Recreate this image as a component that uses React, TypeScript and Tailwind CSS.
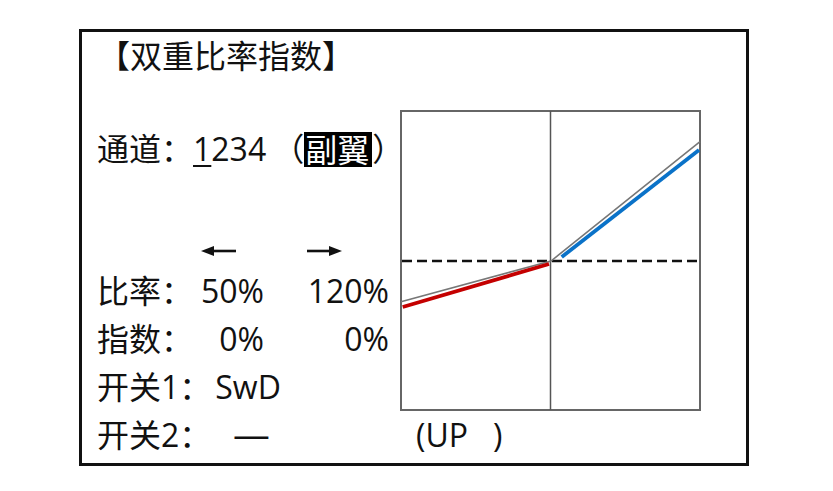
import React from "react";

const font = "font-['Open_Sans','Noto_Sans_CJK_SC',sans-serif]";

function Arrow({ dir }: { dir: "left" | "right" }) {
  const flip = dir === "left";
  return (
    <svg width="35" height="14" viewBox="0 0 35 14" className={flip ? "-scale-x-100" : ""}>
      <line x1="0" y1="7" x2="24" y2="7" stroke="#111" strokeWidth="2.6" />
      <polygon points="22,2 35,7 22,12" fill="#111" />
    </svg>
  );
}

function Row({ label, children }: { label: string; children?: React.ReactNode }) {
  return (
    <div className="flex h-[48px] w-max items-center leading-[48px] whitespace-nowrap">
      <span className="shrink-0 whitespace-pre">{label}</span>
      {children}
    </div>
  );
}

function Chart() {
  return (
    <svg width="301" height="301" viewBox="0 0 301 301">
      <rect x="1" y="1" width="299" height="299" fill="none" stroke="#666" strokeWidth="2" />
      <line x1="150.5" y1="1" x2="150.5" y2="300" stroke="#555" strokeWidth="1.5" />
      <line x1="2" y1="151" x2="300" y2="151" stroke="#111" strokeWidth="2.4" strokeDasharray="10 5" />
      <polyline points="1,191.7 151,151 300,31.7" fill="none" stroke="#777" strokeWidth="1.6" />
      <line x1="2.7" y1="197" x2="149" y2="154" stroke="#c40000" strokeWidth="3.8" />
      <line x1="161.7" y1="147" x2="299" y2="40" stroke="#0a72c8" strokeWidth="3.8" />
    </svg>
  );
}

export default function App() {
  return (
    <div className={`w-[833px] h-[491px] bg-white pt-[29px] pl-[79px] text-[#111] text-[32px] ${font}`}>
      <div className="w-[670px] h-[437px] border-[3px] border-[#111] flex flex-col">
        <div className="h-[48px] leading-[48px] pl-[16px]">【双重比率指数】</div>
        <div className="flex pt-[30px]">
          <div className="w-[318px] shrink-0 pl-[15px] flex flex-col">
            <div className="mt-[15px]">
              <Row label="通道：">
                <span className="underline decoration-2 underline-offset-[4px]">1</span>
                <span>234</span>
                <span className="ml-[6px]">（</span>
                <span className="shrink-0 inline-block h-[35px] leading-[35px] bg-black text-white pl-[1px] pr-[3px]">副翼</span>
                <span>）</span>
              </Row>
            </div>
            <div className="mt-[66px] h-[24px] flex items-center pl-[104px] gap-[71px]">
              <Arrow dir="left" />
              <Arrow dir="right" />
            </div>
            <div className="mt-[4px]">
              <Row label="比率：">
                <span className="w-[71px] text-right">50%</span>
                <span className="w-[125px] text-right">120%</span>
              </Row>
              <Row label="指数：">
                <span className="w-[71px] text-right">0%</span>
                <span className="w-[125px] text-right">0%</span>
              </Row>
              <Row label="开关1：">
                <span className="ml-[4px]">SwD</span>
              </Row>
              <Row label="开关2：">
                <span className="ml-[22px] inline-block scale-x-[1.15] origin-left">—</span>
              </Row>
            </div>
          </div>
          <div className="w-[301px] shrink-0 flex flex-col">
            <Chart />
            <div className="h-[48px] leading-[48px] pl-[16px] whitespace-pre">(UP   )</div>
          </div>
        </div>
      </div>
    </div>
  );
}
